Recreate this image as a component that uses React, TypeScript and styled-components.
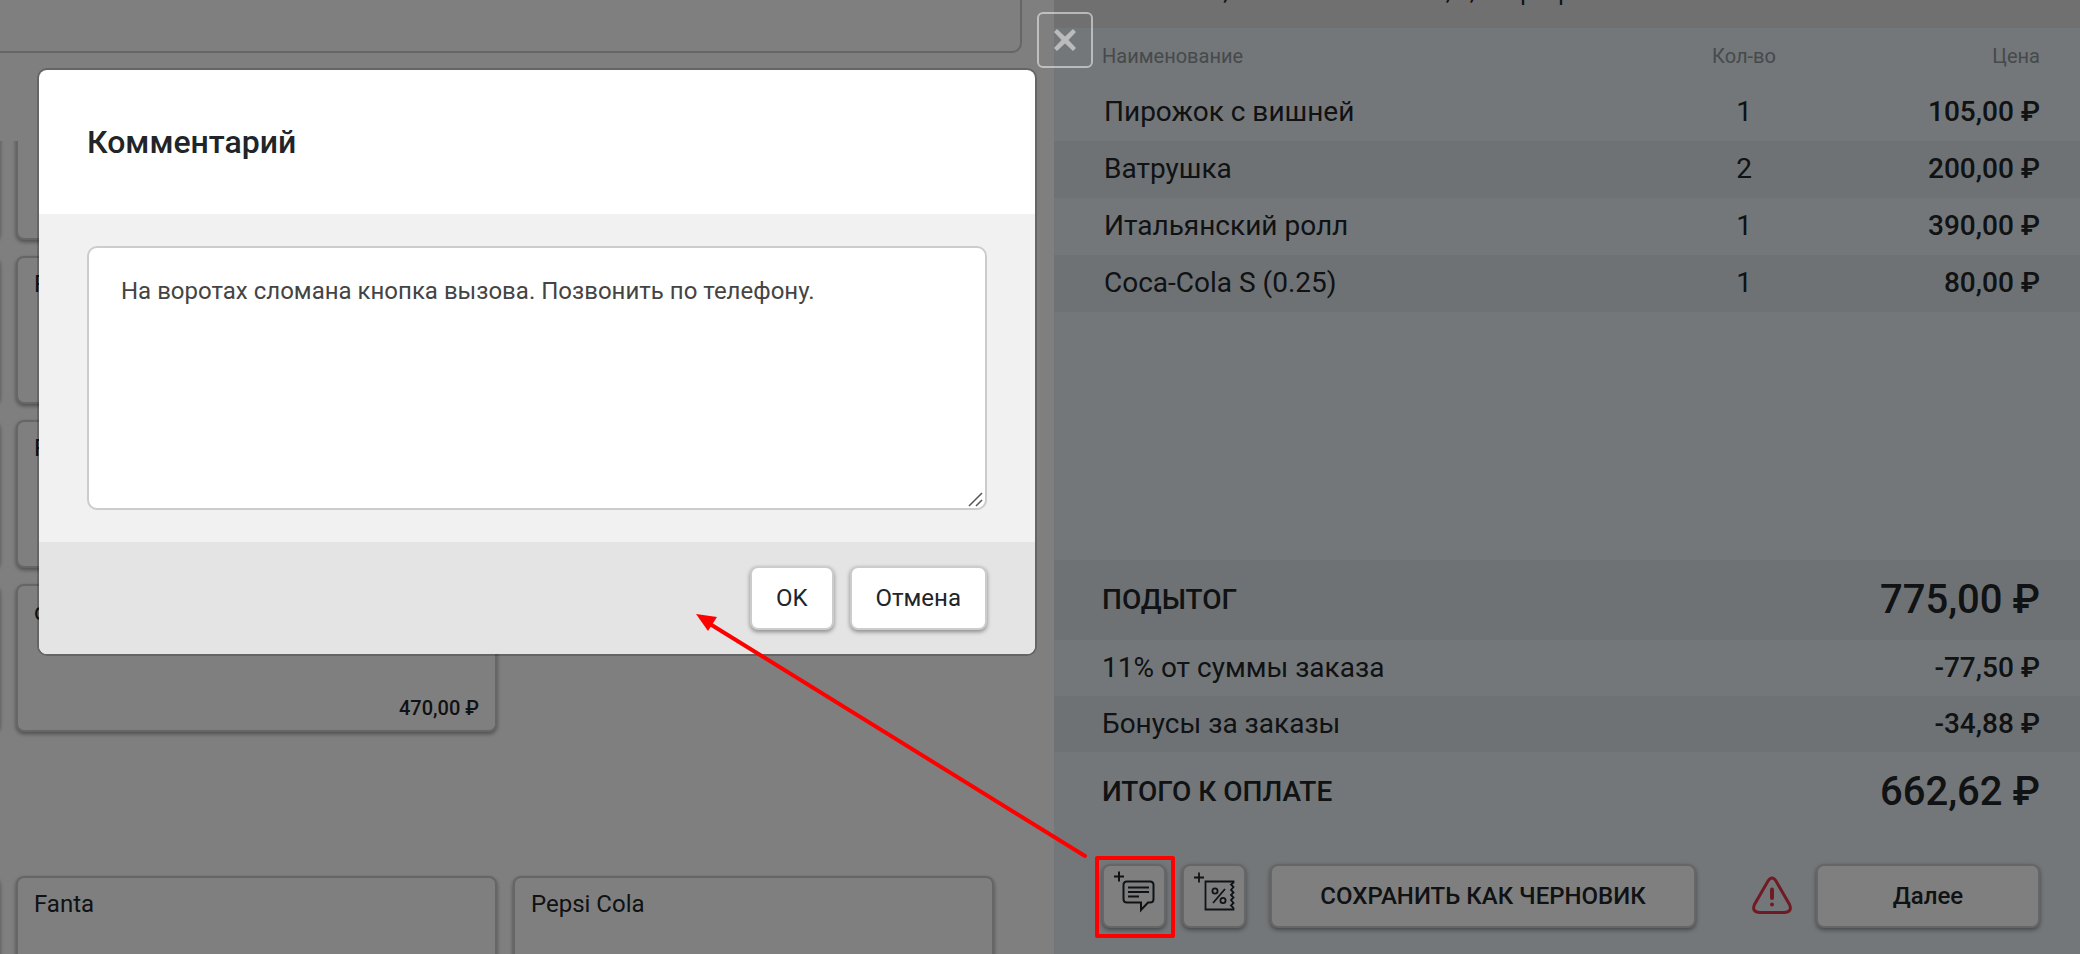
import React from 'react';
import styled, { createGlobalStyle, css } from 'styled-components';

const Global = createGlobalStyle`
  * { box-sizing: border-box; }
  body {
    margin: 0;
    background: #fff;
    color: #212529;
    font-family: Roboto, 'Liberation Sans', sans-serif;
    font-size: 24px;
  }
  button, textarea { font: inherit; color: inherit; }
`;

const Page = styled.div`
  position: relative;
  display: grid;
  grid-template-columns: minmax(0, 1054fr) minmax(0, 1026fr);
  height: 100vh;
  overflow: hidden;
`;

/* Catalogue */
const Catalog = styled.main`
  display: flex;
  flex-direction: column;
  overflow: hidden;
`;

const SearchPanel = styled.div`
  flex: none;
  height: 53px;
  margin-right: 32px;
  border: solid #ccc;
  border-width: 0 2px 2px 0;
  border-bottom-right-radius: 10px;
`;

const Scroller = styled.div`
  flex: 1;
  display: flex;
  flex-direction: column;
  justify-content: flex-end;
  gap: 144px;
  margin-top: 88px;
  overflow: hidden;
`;

const CardGrid = styled.section`
  display: grid;
  grid-template-columns: repeat(3, minmax(0, 1fr));
  grid-auto-rows: 148px;
  gap: 16px;
  margin: 0 60px 0 -481px;
`;

const LastGrid = styled(CardGrid)`
  height: 78px;
`;

const raised = css`
  border: 2px solid #ccc;
  border-radius: 8px;
  background: #fff;
  box-shadow: 0 2px 4px rgba(0, 0, 0, 0.4);
`;

const Card = styled.button`
  ${raised}
  display: flex;
  flex-direction: column;
  justify-content: space-between;
  padding: 12px 16px 10px;
  text-align: left;
  line-height: 28px;
`;

const CardPrice = styled.span`
  align-self: flex-end;
  font-size: 20px;
  line-height: 24px;
  font-weight: 500;
`;

/* Order */
const Order = styled.aside`
  display: flex;
  flex-direction: column;
  background: #e6eef2;
  overflow: hidden;
`;

const Address = styled.div`
  flex: none;
  display: flex;
  align-items: flex-end;
  height: 28px;
  padding: 0 40px 22px 48px;
  background: #e0e0e2;
  line-height: 28px;
  white-space: nowrap;
`;

const Items = styled.table`
  width: 100%;
  border-collapse: collapse;
  table-layout: fixed;
  font-size: 28px;
`;

const Head = styled.th<{ $align?: string }>`
  height: 56px;
  padding: 0;
  font-size: 20px;
  font-weight: 400;
  color: #8c9498;
  text-align: ${(p) => p.$align || 'left'};
  &:first-child { padding-left: 48px; }
  &:last-child { padding-right: 40px; }
`;

const ItemRow = styled.tr`
  height: 57px;
  &:nth-child(even) { background: #dce4e8; }
`;

const Cell = styled.td<{ $align?: string }>`
  padding: 0 0 2px;
  text-align: ${(p) => p.$align || 'left'};
  &:first-child { padding-left: 50px; }
  &:last-child { padding-right: 40px; font-weight: 500; }
`;

const Totals = styled.dl`
  margin: auto 0 0;
  font-size: 28px;
`;

const TotalRow = styled.div<{ $main?: boolean; $shaded?: boolean }>`
  display: flex;
  align-items: center;
  justify-content: space-between;
  height: ${(p) => (p.$main ? 80 : 56)}px;
  padding: 0 40px 2px 48px;
  background: ${(p) => (p.$shaded ? '#dce4e8' : 'transparent')};
  dt { font-weight: ${(p) => (p.$main ? 500 : 400)}; }
  dd {
    margin: 0;
    font-weight: 500;
    font-size: ${(p) => (p.$main ? 40 : 28)}px;
  }
`;

const Actions = styled.div`
  flex: none;
  display: flex;
  align-items: center;
  padding: 32px 40px 26px 48px;
`;

const Button = styled.button<{ $strong?: boolean }>`
  ${raised}
  height: 64px;
  padding: 0 24px;
  font-weight: ${(p) => (p.$strong ? 500 : 400)};
`;

const IconButton = styled(Button)`
  width: 64px;
  padding: 0;
  margin-right: 16px;
  svg { display: block; }
`;

const SaveButton = styled(Button)`
  flex: 1;
  margin-left: 8px;
`;

const NextButton = styled(Button)`
  width: 224px;
`;

const Warning = styled.svg`
  flex: none;
  margin: 0 24px 0 56px;
`;

/* Dialog */
const Backdrop = styled.div`
  position: absolute;
  inset: 0;
  background: rgba(0, 0, 0, 0.5);
`;

const Dialog = styled.div`
  position: absolute;
  top: 68px;
  left: 37px;
  width: 1000px;
  border: 2px solid rgba(0, 0, 0, 0.2);
  border-radius: 10px;
  background: #fff;
  background-clip: padding-box;
`;

const DialogHeader = styled.header`
  padding: 52px 48px;
`;

const DialogTitle = styled.h2`
  margin: 0;
  font-size: 32px;
  line-height: 40px;
  font-weight: 500;
`;

const DialogBody = styled.div`
  padding: 32px 48px;
  background: #f1f1f1;
`;

const Comment = styled.textarea`
  display: block;
  width: 100%;
  height: 264px;
  padding: 24px 32px;
  border: 2px solid #ccc;
  border-radius: 10px;
  background: #fff;
  color: #444;
  line-height: 38px;
  outline: none;
  resize: none;
`;

const CommentField = styled.label`
  position: relative;
  display: block;
`;

const Grip = styled.svg`
  position: absolute;
  right: 3px;
  bottom: 2px;
`;

const DialogFooter = styled.footer`
  display: flex;
  justify-content: flex-end;
  gap: 16px;
  padding: 24px 48px;
  border-radius: 0 0 8px 8px;
  background: #e4e4e4;
`;

const Close = styled.button`
  position: absolute;
  top: -58px;
  right: -58px;
  display: grid;
  place-items: center;
  width: 56px;
  height: 56px;
  padding: 0;
  border: 2px solid rgba(255, 255, 255, 0.5);
  border-radius: 6px;
  background: transparent;
`;

/* Hint pointing from the comment button to the dialog */
const Hint = styled.svg`
  position: absolute;
  left: 690px;
  top: 604px;
  pointer-events: none;
`;

const products = ['', '', '', '', 'P', '', '', 'P', '', '', 'с'];

const items = [
  ['Пирожок с вишней', '1', '105,00 ₽'],
  ['Ватрушка', '2', '200,00 ₽'],
  ['Итальянский ролл', '1', '390,00 ₽'],
  ['Coca-Cola S (0.25)', '1', '80,00 ₽'],
];

export default function App() {
  return (
    <>
      <Global />
      <Page>
        <Catalog>
          <SearchPanel />
          <Scroller>
            <CardGrid>
              {products.map((name, i) => (
                <Card key={i} type="button">
                  <span>{name}</span>
                  {i === 10 && <CardPrice>470,00 ₽</CardPrice>}
                </Card>
              ))}
            </CardGrid>
            <LastGrid>
              {['', 'Fanta', 'Pepsi Cola'].map((name, i) => (
                <Card key={i} type="button"><span>{name}</span></Card>
              ))}
            </LastGrid>
          </Scroller>
        </Catalog>

        <Order>
          <Address>г. Иваново, Московская аллея, 1, квартира 100</Address>
          <Items>
            <colgroup>
              <col />
              <col width="160" />
              <col width="256" />
            </colgroup>
            <thead>
              <tr>
                <Head>Наименование</Head>
                <Head $align="center">Кол-во</Head>
                <Head $align="right">Цена</Head>
              </tr>
            </thead>
            <tbody>
              {items.map(([name, qty, price]) => (
                <ItemRow key={name}>
                  <Cell>{name}</Cell>
                  <Cell $align="center">{qty}</Cell>
                  <Cell $align="right">{price}</Cell>
                </ItemRow>
              ))}
            </tbody>
          </Items>
          <Totals>
            <TotalRow $main $shaded><dt>ПОДЫТОГ</dt><dd>775,00 ₽</dd></TotalRow>
            <TotalRow><dt>11% от суммы заказа</dt><dd>-77,50 ₽</dd></TotalRow>
            <TotalRow $shaded><dt>Бонусы за заказы</dt><dd>-34,88 ₽</dd></TotalRow>
            <TotalRow $main><dt>ИТОГО К ОПЛАТЕ</dt><dd>662,62 ₽</dd></TotalRow>
          </Totals>
          <Actions>
            <IconButton type="button" aria-label="Добавить комментарий">
              <svg width="60" height="60" viewBox="0 0 60 60" fill="none" stroke="#212529" strokeWidth="2">
                <path d="M10 10.500H20M15 5.500V15.500" />
                <path d="M23 15.500H46Q49.500 15.500 49.500 19V33Q49.500 36.500 46 36.500H44L37 44V36.500H23Q19.500 36.500 19.500 33V19Q19.500 15.500 23 15.500Z" />
                <path d="M24 21.500H45M24 26H45M24 30.500H35" />
              </svg>
            </IconButton>
            <IconButton type="button" aria-label="Добавить скидку">
              <svg width="60" height="60" viewBox="0 0 60 60" fill="none" stroke="#212529" strokeWidth="1.800">
                <path d="M10 11.500H20M15 6.500V16.500" />
                <path d="M49.500 15.500H21.500V43.500H49.500V42L47 39.500L49.500 37L47 34L49.500 31.500L47 29L49.500 26.500L47 24L49.500 21L47 18.500L49.500 16.500Z" />
                <path d="M41 23L29 37" />
                <circle cx="31" cy="25" r="2.600" />
                <circle cx="39" cy="34.500" r="2.600" />
              </svg>
            </IconButton>
            <SaveButton type="button" $strong>СОХРАНИТЬ КАК ЧЕРНОВИК</SaveButton>
            <Warning width="40" height="40" viewBox="0 0 40 40" fill="none" stroke="#e03648" strokeWidth="3" strokeLinecap="round">
              <path d="M16 5Q20 -1 24 5L37.500 28.500Q40.500 35.500 33 36.500H7Q-.5 35.500 2.500 28.500Z" />
              <path d="M20 13.500V22" strokeWidth="4" />
              <circle cx="20" cy="28.500" r="2" fill="#e03648" stroke="none" />
            </Warning>
            <NextButton type="button" $strong>Далее</NextButton>
          </Actions>
        </Order>

        <Backdrop />
        <Dialog role="dialog" aria-labelledby="dialog-title">
          <DialogHeader>
            <DialogTitle id="dialog-title">Комментарий</DialogTitle>
          </DialogHeader>
          <DialogBody>
            <CommentField>
              <Comment
                aria-labelledby="dialog-title"
                defaultValue="На воротах сломана кнопка вызова. Позвонить по телефону."
              />
              <Grip width="16" height="16" viewBox="0 0 16 16" stroke="#555" strokeWidth="1.500">
                <path d="M1 14L14 1M8 14L14 8" />
              </Grip>
            </CommentField>
          </DialogBody>
          <DialogFooter>
            <Button type="button">OK</Button>
            <Button type="button">Отмена</Button>
          </DialogFooter>
          <Close type="button" aria-label="Закрыть">
            <svg width="24" height="24" viewBox="0 0 24 24" fill="#fff" fillOpacity=".5">
              <path d="M4 1L12 8.500L20 1L23 4L15.500 12L23 20L20 23L12 15.500L4 23L1 20L8.500 12L1 4Z" />
            </svg>
          </Close>
        </Dialog>

        <Hint width="490" height="340" viewBox="0 0 490 340" fill="none" stroke="#f00" strokeWidth="4" strokeLinecap="round" strokeLinejoin="round">
          <path d="M20 20L395 252" />
          <path d="M6 10L27 13L18 27Z" fill="#f00" stroke="none" />
          <rect x="407" y="254" width="76" height="78" />
        </Hint>
      </Page>
    </>
  );
}
